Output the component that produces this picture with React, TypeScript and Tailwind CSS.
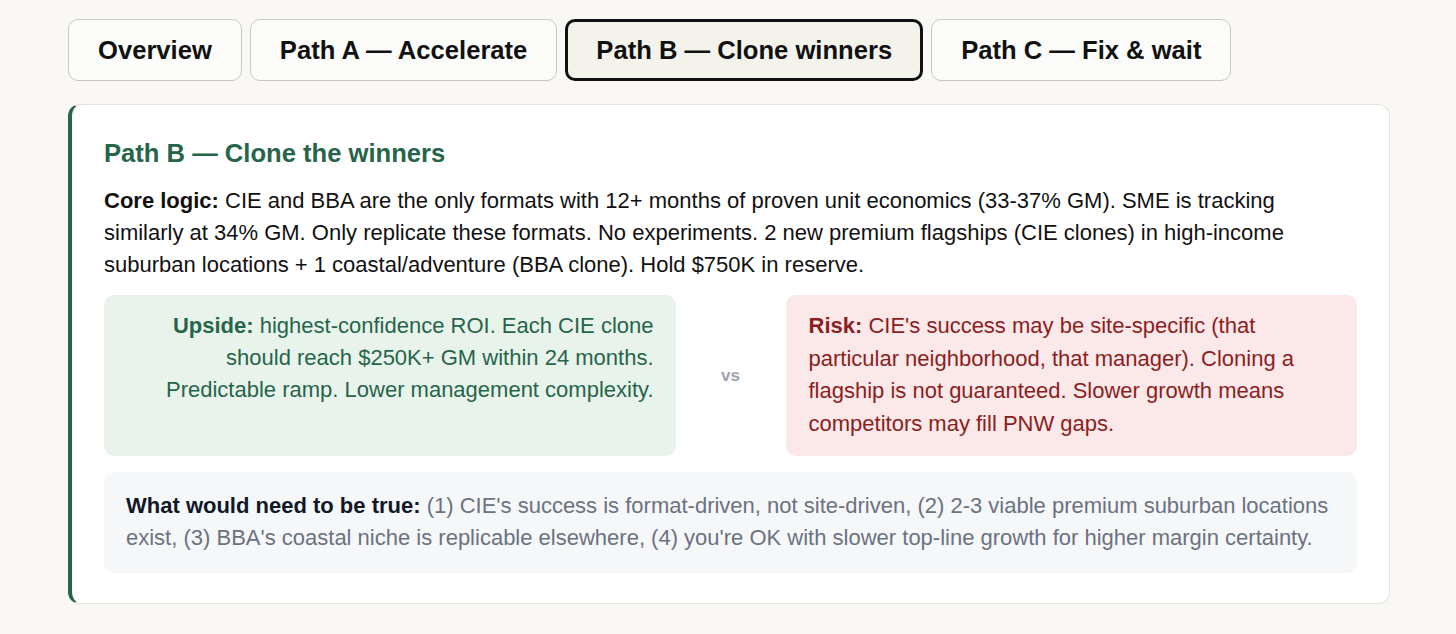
import React from "react";

export default function App() {
  const tabs = ["Overview", "Path A — Accelerate", "Path B — Clone winners", "Path C — Fix & wait"];
  return (
    <div
      className="min-h-[634px] w-full bg-[#f9f8f4] pl-[68px] pr-[66px] pt-[19px]"
      style={{ fontFamily: '"Liberation Sans", Arial, sans-serif' }}
    >
      <div className="flex gap-[8px]">
        {tabs.map((t, i) =>
          i === 2 ? (
            <div
              key={t}
              className="flex h-[62px] items-center rounded-[10px] border-[3px] border-[#111111] bg-[#f3f3ec] px-[28px] text-[25.6px] font-bold text-[#111111]"
            >
              {t}
            </div>
          ) : (
            <div
              key={t}
              className="flex h-[62px] items-center rounded-[10px] border border-[#c9c8c2] bg-[#fbfbf9] px-[29px] text-[25.6px] font-bold text-[#111111]"
            >
              {t}
            </div>
          )
        )}
      </div>

      <div className="mt-[23px] rounded-[12px] border border-[#e4e4e0] border-l-[4px] border-l-[#2a6548] bg-white px-[32px] pt-[32px] pb-[30px]">
        <h2 className="text-[25.6px] font-bold leading-[32px] text-[#27654a]">Path B — Clone the winners</h2>
        <p className="mt-[16px] text-[22px] leading-[32px] text-[#111111]">
          <span className="font-bold">Core logic:</span> CIE and BBA are the only formats with 12+ months of proven unit
          economics (33-37% GM). SME is tracking similarly at 34% GM. Only replicate these formats. No experiments. 2 new
          premium flagships (CIE clones) in high-income suburban locations + 1 coastal/adventure (BBA clone). Hold $750K
          in reserve.
        </p>

        <div className="mt-[14px] grid grid-cols-[1fr_110px_1fr]">
          <div className="rounded-[10px] bg-[#e8f3eb] pl-[22px] pr-[22px] pt-[15px] pb-[16px] text-right text-[22px] leading-[32px] text-[#27654a]">
            <span className="font-bold">Upside:</span> highest-confidence ROI. Each CIE clone should reach $250K+ GM
            within 24 months. Predictable ramp. Lower management complexity.
          </div>
          <div className="flex items-center justify-center text-[17px] font-bold text-[#9ca3af]">vs</div>
          <div className="rounded-[10px] bg-[#fbe8e8] pl-[23px] pr-[22px] pt-[15px] pb-[16px] text-[22px] leading-[32.5px] text-[#8a1f1f]">
            <span className="font-bold">Risk:</span> CIE's success may be site-specific (that particular neighborhood,
            that manager). Cloning a flagship is not guaranteed. Slower growth means competitors may fill PNW gaps.
          </div>
        </div>

        <div className="mt-[16px] rounded-[10px] bg-[#f6f7f9] px-[22px] pt-[18px] pb-[19px] text-[22px] leading-[32px] text-[#6b7280]">
          <span className="font-bold text-[#111827]">What would need to be true:</span> (1) CIE's success is
          format-driven, not site-driven, (2) 2-3 viable premium suburban locations exist, (3) BBA's coastal niche is
          replicable elsewhere, (4) you're OK with slower top-line growth for higher margin certainty.
        </div>
      </div>
    </div>
  );
}
